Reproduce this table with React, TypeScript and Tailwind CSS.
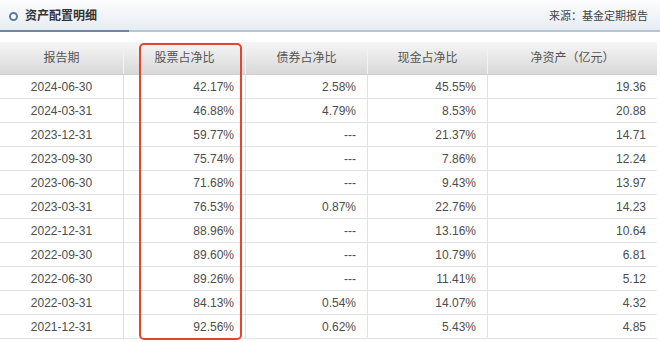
const rows = [
  ["2024-06-30", "42.17%", "2.58%", "45.55%", "19.36"],
  ["2024-03-31", "46.88%", "4.79%", "8.53%", "20.88"],
  ["2023-12-31", "59.77%", "---", "21.37%", "14.71"],
  ["2023-09-30", "75.74%", "---", "7.86%", "12.24"],
  ["2023-06-30", "71.68%", "---", "9.43%", "13.97"],
  ["2023-03-31", "76.53%", "0.87%", "22.76%", "14.23"],
  ["2022-12-31", "88.96%", "---", "13.16%", "10.64"],
  ["2022-09-30", "89.60%", "---", "10.79%", "6.81"],
  ["2022-06-30", "89.26%", "---", "11.41%", "5.12"],
  ["2022-03-31", "84.13%", "0.54%", "14.07%", "4.32"],
  ["2021-12-31", "92.56%", "0.62%", "5.43%", "4.85"],
];

const heads = ["报告期", "股票占净比", "债券占净比", "现金占净比", "净资产（亿元）"];

const cjk = "font-['Liberation_Sans','Noto_Sans_CJK_SC',sans-serif]";

export default function App() {
  return (
    <div className={`w-[660px] h-[342px] overflow-hidden bg-white ${cjk}`}>
      {/* title bar */}
      <div className="relative h-[32px] bg-gradient-to-b from-[#fdfdfe] to-[#e5ebf1] flex items-center justify-between pl-[9px] pr-[12px]">
        <div className="flex items-center gap-[7px]">
          <span className="w-[9px] h-[9px] rounded-full border-2 border-[#5b7d9c] bg-white" />
          <span className="text-[12px] font-bold text-[#333]">资产配置明细</span>
        </div>
        <span className="text-[11px] text-[#444]">来源：基金定期报告</span>
        <div className="absolute left-0 bottom-0 w-full h-[2px] bg-[#b6c6d6]" />
        <div className="absolute left-0 bottom-0 w-[129px] h-[2px] bg-[#6c88a3]" />
      </div>

      <div className="relative mt-[10px] w-[657px]">
        {/* header row */}
        <div className="grid grid-cols-[123px_122px_122px_120px_1fr] h-[33px] bg-gradient-to-b from-[#f6f6f6] to-[#d8d8d8] border-b border-[#cfcfcf]">
          {heads.map((h, i) => (
            <div
              key={h}
              className={`flex items-center justify-center text-[12px] text-[#555] ${
                i > 0 ? "border-l border-[#f2f2f2]" : ""
              }`}
            >
              {h}
            </div>
          ))}
        </div>

        {rows.map((r) => (
          <div
            key={r[0]}
            className="grid grid-cols-[123px_122px_122px_120px_1fr] h-[24px] border-b border-[#e2e2e2] text-[12px] text-[#4d4d4d]"
          >
            <div className="flex items-center justify-center">{r[0]}</div>
            {r.slice(1).map((v, i) => (
              <div
                key={i}
                className="flex items-center justify-end pr-[11px] border-l border-[#e2e2e2]"
              >
                {v}
              </div>
            ))}
          </div>
        ))}

        {/* highlight box */}
        <div className="absolute left-[139px] top-[1px] w-[103px] h-[297px] rounded-[5px] border-2 border-[#e2462f]" />
      </div>
    </div>
  );
}
